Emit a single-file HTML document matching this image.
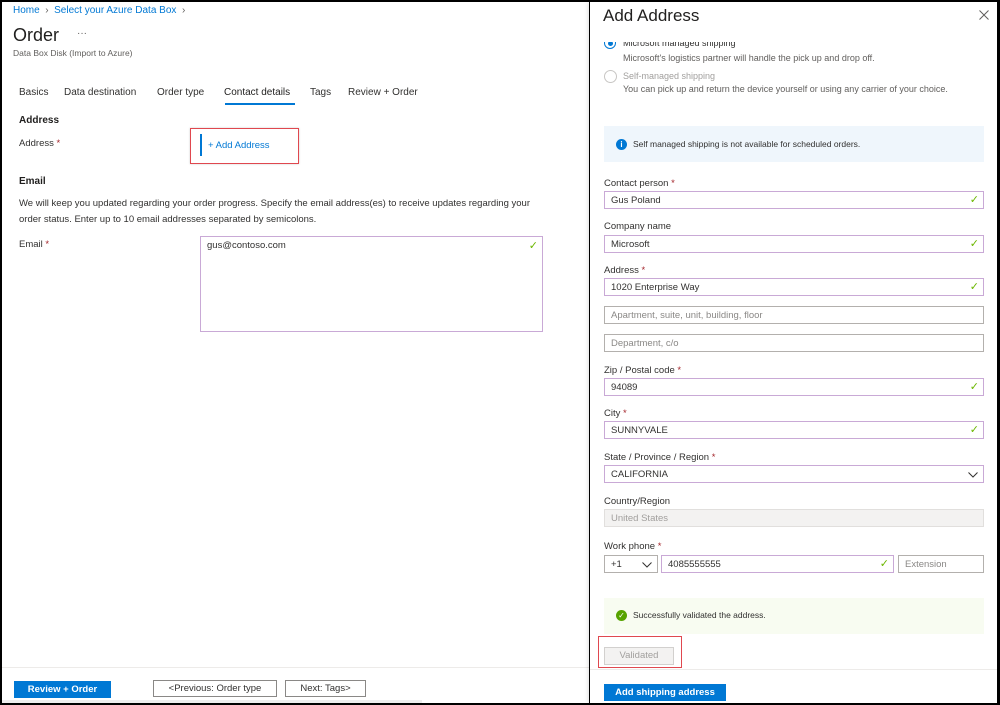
<!DOCTYPE html>
<html><head><meta charset="utf-8"><style>
*{margin:0;padding:0;box-sizing:border-box}
body{width:1000px;height:705px;background:#000;font-family:"Liberation Sans",sans-serif;font-size:10px;color:#323130;position:relative;overflow:hidden}
.a{position:absolute;white-space:nowrap}
#L{position:absolute;left:2px;top:2px;width:587px;height:701px;background:#fff}
#R{position:absolute;left:590px;top:2px;width:407px;height:701px;background:#fff;box-shadow:-2px 0 4px rgba(0,0,0,.12)}
.blue{color:#0078d4}
.req{color:#a4262c}
.inp{position:absolute;left:14px;width:380px;height:18px;border:1px solid #c9a9d6;background:#fff;padding-left:6px;line-height:18px;font-size:9.5px;color:#323130}
.inp.g{border-color:#b3b0ad;color:#8a8886}
.chk{position:absolute;right:4px;top:0;color:#6bb700;font-size:11px;line-height:16px}
.lbl{position:absolute;left:14px;font-size:9.5px;color:#323130}
.btn{position:absolute;height:17px;border:1px solid #8a8886;background:#fff;text-align:center;line-height:15px;font-size:9.5px}
</style></head><body>
<div id="L">
<div class="a blue" style="left:11px;top:3px;font-size:10px">Home <span style="color:#605e5c">&nbsp;›&nbsp;</span> Select your Azure Data Box <span style="color:#605e5c">&nbsp;›</span></div>
<div class="a" style="left:11px;top:23px;font-size:18px;color:#201f1e">Order</div>
<div class="a" style="left:75px;top:26px;font-size:10px;color:#605e5c">···</div>
<div class="a" style="left:11px;top:46px;font-size:8.5px;color:#605e5c">Data Box Disk (Import to Azure)</div>
<div class="a" style="left:17px;top:85px;font-size:10px">Basics</div>
<div class="a" style="left:62px;top:85px;font-size:10px">Data destination</div>
<div class="a" style="left:155px;top:85px;font-size:10px">Order type</div>
<div class="a" style="left:222px;top:85px;font-size:10px;color:#201f1e">Contact details</div>
<div class="a" style="left:223px;top:101px;width:70px;height:2px;background:#0078d4"></div>
<div class="a" style="left:308px;top:85px;font-size:10px">Tags</div>
<div class="a" style="left:346px;top:85px;font-size:10px">Review + Order</div>
<div class="a" style="left:17px;top:113px;font-size:10px;font-weight:bold;color:#201f1e">Address</div>
<div class="a" style="left:17px;top:136px;font-size:9.5px">Address <span class="req">*</span></div>
<div class="a" style="left:188px;top:126px;width:109px;height:36px;border:1.5px solid #e0484f;box-shadow:0 0 2px rgba(0,0,0,.2)"></div>
<div class="a" style="left:198px;top:132px;width:2px;height:22px;background:#0078d4"></div>
<div class="a blue" style="left:206px;top:138px;font-size:9.5px">+ Add Address</div>
<div class="a" style="left:17px;top:174px;font-size:10px;font-weight:bold;color:#201f1e">Email</div>
<div class="a" style="left:17px;top:194px;font-size:9.5px;line-height:15.5px;white-space:normal;width:520px">We will keep you updated regarding your order progress. Specify the email address(es) to receive updates regarding your order status. Enter up to 10 email addresses separated by semicolons.</div>
<div class="a" style="left:17px;top:237px;font-size:9.5px">Email <span class="req">*</span></div>
<div class="a" style="left:198px;top:234px;width:343px;height:96px;border:1px solid #c9a9d6;padding:3px 6px;font-size:9.5px">gus@contoso.com<span class="chk" style="top:1px">✓</span></div>
<div class="a" style="left:0;top:665px;width:587px;height:1px;background:#edebe9"></div>
<div class="a" style="left:12px;top:679px;width:97px;height:17px;background:#0078d4;color:#fff;text-align:center;line-height:17px;font-size:9.5px;font-weight:bold">Review + Order</div>
<div class="btn" style="left:151px;top:678px;width:124px">&lt;Previous: Order type</div>
<div class="btn" style="left:283px;top:678px;width:81px">Next: Tags&gt;</div>
<div class="a" style="left:0;top:698px;width:420px;height:3px;background:#eee"></div>
</div>
<div id="R">
<div class="a" style="left:13px;top:4px;font-size:17px;color:#201f1e">Add Address</div>
<svg class="a" style="left:389px;top:8px" width="10" height="10"><path d="M0.5 0.5L9.5 9.5M9.5 0.5L0.5 9.5" stroke="#605e5c" stroke-width="1"/></svg>
<div class="a" style="left:0;top:40px;width:407px;height:10px;overflow:hidden">
<div class="a" style="left:14px;top:-5px;width:12px;height:12px;border:1px solid #0078d4;border-radius:50%"><div style="position:absolute;left:3px;top:3px;width:5px;height:5px;border-radius:50%;background:#0078d4"></div></div>
<div class="a" style="left:33px;top:-4px;font-size:9px;color:#323130">Microsoft managed shipping</div>
</div>
<div class="a" style="left:33px;top:51px;font-size:9px;color:#605e5c">Microsoft's logistics partner will handle the pick up and drop off.</div>
<div class="a" style="left:14px;top:68px;width:13px;height:13px;border:1px solid #c8c6c4;border-radius:50%"></div>
<div class="a" style="left:33px;top:69px;font-size:9px;color:#a19f9d">Self-managed shipping</div>
<div class="a" style="left:33px;top:82px;font-size:9px;color:#605e5c">You can pick up and return the device yourself or using any carrier of your choice.</div>
<div class="a" style="left:14px;top:124px;width:380px;height:36px;background:#eff6fc"></div>
<div class="a" style="left:26px;top:137px;width:11px;height:11px;border-radius:50%;background:#0078d4;color:#fff;font-size:8px;font-weight:bold;text-align:center;line-height:11px">i</div>
<div class="a" style="left:43px;top:137px;font-size:8.5px">Self managed shipping is not available for scheduled orders.</div>

<div class="lbl" style="top:176px">Contact person <span class="req">*</span></div>
<div class="inp" style="top:189px">Gus Poland<span class="chk">✓</span></div>
<div class="lbl" style="top:219px">Company name</div>
<div class="inp" style="top:233px">Microsoft<span class="chk">✓</span></div>
<div class="lbl" style="top:263px">Address <span class="req">*</span></div>
<div class="inp" style="top:276px">1020 Enterprise Way<span class="chk">✓</span></div>
<div class="inp g" style="top:304px">Apartment, suite, unit, building, floor</div>
<div class="inp g" style="top:332px">Department, c/o</div>
<div class="lbl" style="top:363px">Zip / Postal code <span class="req">*</span></div>
<div class="inp" style="top:376px">94089<span class="chk">✓</span></div>
<div class="lbl" style="top:406px">City <span class="req">*</span></div>
<div class="inp" style="top:419px">SUNNYVALE<span class="chk">✓</span></div>
<div class="lbl" style="top:450px">State / Province / Region <span class="req">*</span></div>
<div class="inp" style="top:463px">CALIFORNIA<svg style="position:absolute;right:5px;top:6px" width="10" height="6"><path d="M0.5 0.5L5 5L9.5 0.5" stroke="#323130" fill="none"/></svg></div>
<div class="lbl" style="top:494px">Country/Region</div>
<div class="inp g" style="top:507px;background:#f3f2f1;border-color:#e1dfdd;color:#a19f9d">United States</div>
<div class="lbl" style="top:539px">Work phone <span class="req">*</span></div>
<div class="inp g" style="top:553px;width:54px;color:#323130">+1<svg style="position:absolute;right:5px;top:6px" width="10" height="6"><path d="M0.5 0.5L5 5L9.5 0.5" stroke="#323130" fill="none"/></svg></div>
<div class="inp" style="top:553px;left:71px;width:233px">4085555555<span class="chk">✓</span></div>
<div class="inp g" style="top:553px;left:308px;width:86px">Extension</div>
<div class="a" style="left:14px;top:596px;width:380px;height:36px;background:#f8fcf1"></div>
<div class="a" style="left:26px;top:608px;width:11px;height:11px;border-radius:50%;background:#57a300;color:#fff;font-size:8px;text-align:center;line-height:11px">✓</div>
<div class="a" style="left:43px;top:608px;font-size:8.5px">Successfully validated the address.</div>
<div class="a" style="left:8px;top:634px;width:84px;height:32px;border:1.5px solid #e0484f"></div>
<div class="a" style="left:14px;top:645px;width:70px;height:18px;background:#f3f2f1;border:1px solid #d2d0ce;color:#a19f9d;text-align:center;line-height:16px;font-size:9.5px">Validated</div>
<div class="a" style="left:0;top:667px;width:407px;height:1px;background:#edebe9"></div>
<div class="a" style="left:14px;top:682px;width:122px;height:17px;background:#0078d4;color:#fff;text-align:center;line-height:17px;font-size:9.5px;font-weight:bold">Add shipping address</div>
</div>
</body></html>
